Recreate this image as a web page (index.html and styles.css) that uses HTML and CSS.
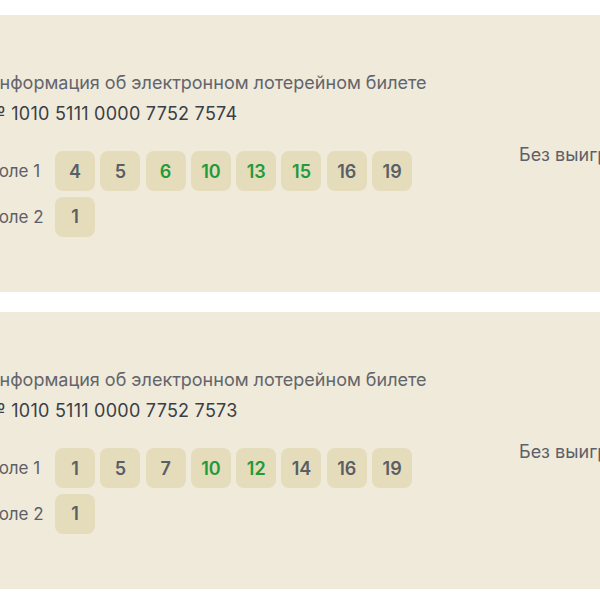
FILE: index.html
```html
<!DOCTYPE html>
<html lang="ru">
<head>
<meta charset="utf-8">
<title>Билеты</title>
<link rel="stylesheet" href="styles.css">
</head>
<body>
<main class="list">
  <section class="card">
    <div class="head">
      <div class="title">Информация об электронном лотерейном билете</div>
      <div class="number">№ 1010 5111 0000 7752 7574</div>
    </div>
    <div class="body">
      <div class="fields">
        <div class="field">
          <span class="label">Поле 1</span>
          <div class="chips">
            <span class="chip">4</span><span class="chip">5</span><span class="chip win">6</span><span class="chip win">10</span><span class="chip win">13</span><span class="chip win">15</span><span class="chip">16</span><span class="chip">19</span>
          </div>
        </div>
        <div class="field">
          <span class="label">Поле 2</span>
          <div class="chips"><span class="chip">1</span></div>
        </div>
      </div>
      <div class="result">Без выигрыша</div>
    </div>
  </section>
  <section class="card">
    <div class="head">
      <div class="title">Информация об электронном лотерейном билете</div>
      <div class="number">№ 1010 5111 0000 7752 7573</div>
    </div>
    <div class="body">
      <div class="fields">
        <div class="field">
          <span class="label">Поле 1</span>
          <div class="chips">
            <span class="chip">1</span><span class="chip">5</span><span class="chip">7</span><span class="chip win">10</span><span class="chip win">12</span><span class="chip">14</span><span class="chip">16</span><span class="chip">19</span>
          </div>
        </div>
        <div class="field">
          <span class="label">Поле 2</span>
          <div class="chips"><span class="chip">1</span></div>
        </div>
      </div>
      <div class="result">Без выигрыша</div>
    </div>
  </section>
</main>
</body>
</html>
```

FILE: styles.css
```css
html, body {
  margin: 0;
  padding: 0;
  background: #ffffff;
  overflow: hidden;
}
body {
  font-family: Inter, "Noto Sans", sans-serif;
  color: #5c6068;
}
.list {
  display: flex;
  flex-direction: column;
  gap: 20px;
  padding-top: 15px;
  margin-left: -40px;
  width: 760px;
}
.card {
  background: #f0eada;
  height: 277px;
  box-sizing: border-box;
  padding: 53px 0 0 26px;
}
.head {
  display: flex;
  flex-direction: column;
  gap: 1px;
}
.title {
  font-size: 18px;
  line-height: 30px;
  color: #62656c;
}
.number {
  font-size: 18px;
  line-height: 30px;
  letter-spacing: 0.25px;
  color: #3a3e46;
}
.body {
  display: flex;
  margin-top: 11px;
}
.fields {
  flex: 0 0 533px;
  display: flex;
  flex-direction: column;
  gap: 5.5px;
  padding-top: 11px;
}
.field {
  display: flex;
  align-items: center;
}
.label {
  width: 69px;
  flex: 0 0 69px;
  font-size: 17px;
  color: #5c6068;
}
.chips {
  display: flex;
  gap: 5.3px;
}
.chip {
  width: 40px;
  height: 40px;
  border-radius: 8px;
  background: #e5dcbb;
  display: flex;
  align-items: center;
  justify-content: center;
  font-size: 18px;
  font-weight: 600;
  color: #5a5e66;
}
.chip.win {
  color: #1f9a3c;
}
.result {
  font-size: 18px;
  line-height: 30px;
  color: #5c6068;
  white-space: nowrap;
}
```
